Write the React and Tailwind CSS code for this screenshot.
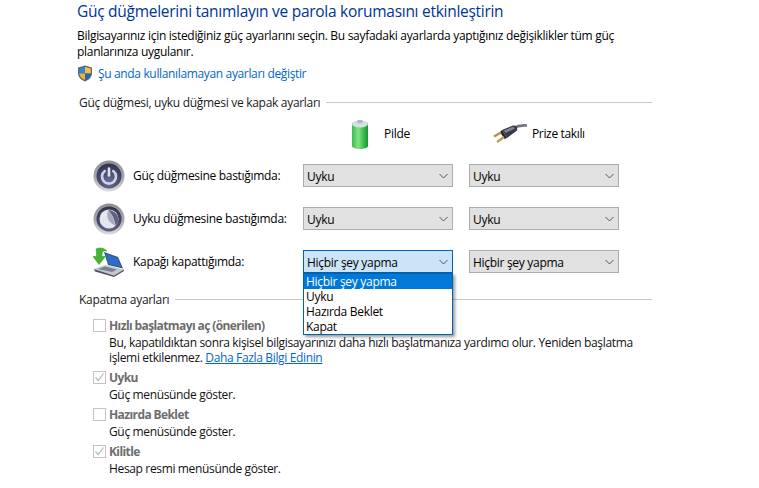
const seg = { fontFamily: '"Open Sans", "Noto Sans", sans-serif' }

function Shield() {
  return (
    <svg width="16" height="17" viewBox="0 0 16 17" className="shrink-0">
      <path d="M8 .5 L15 2.5 V8 C15 12 12 15 8 16.5 C4 15 1 12 1 8 V2.5 Z" fill="#5d6472" />
      <path d="M8 2 V8.5 H2.2 V3.5 Z" fill="#2f86dc" />
      <path d="M8 2 L13.8 3.5 V8.5 H8 Z" fill="#f7c430" />
      <path d="M2.2 8.5 H8 V15 C5 13.8 2.5 11.5 2.2 8.5 Z" fill="#f2b41f" />
      <path d="M8 8.5 H13.8 C13.5 11.5 11 13.8 8 15 Z" fill="#1f66c0" />
    </svg>
  )
}

function RoundIcon({ children, id }) {
  return (
    <svg width="32" height="32" viewBox="0 0 32 32" className="shrink-0">
      <defs>
        <linearGradient id={id + 'r'} x1="0" y1="0" x2="0" y2="1">
          <stop offset="0" stopColor="#8f8f92" />
          <stop offset=".55" stopColor="#a9a9ab" />
          <stop offset="1" stopColor="#dcdcdc" />
        </linearGradient>
        <radialGradient id={id} cx=".5" cy=".75" r=".8">
          <stop offset="0" stopColor="#6d7198" />
          <stop offset=".6" stopColor="#44476a" />
          <stop offset="1" stopColor="#2c2d46" />
        </radialGradient>
      </defs>
      <circle cx="16" cy="16" r="15.5" fill={`url(#${id}r)`} />
      <circle cx="16" cy="16" r="12.5" fill={`url(#${id})`} />
      {children}
    </svg>
  )
}

function PowerIcon() {
  return (
    <RoundIcon id="pw">
      <path d="M11.8 11 A7 7 0 1 0 20.2 11" fill="none" stroke="#cfd4e8" strokeWidth="2.6" strokeLinecap="round" />
      <path d="M16 8.5 V15.5" stroke="#dfe3f2" strokeWidth="2.6" strokeLinecap="round" />
    </RoundIcon>
  )
}

function SleepIcon() {
  return (
    <RoundIcon id="sl">
      <circle cx="16" cy="16" r="9.5" fill="#e3e5f0" />
      <path d="M15 7 C20.5 7.2 25.4 11 25.4 16.4 C25.4 19 24.2 21.4 22.6 22.8 C21.8 16.5 19 11 15 7 Z" fill="#5e617f" />
      <path d="M15 7.4 C19 11 21.4 16 22 22.4 C19 21 16.3 19.2 15 16 C14 13 14 10 15 7.4 Z" fill="#a6a9bd" />
    </RoundIcon>
  )
}

function LidIcon() {
  return (
    <svg width="32" height="32" viewBox="0 0 32 32" className="shrink-0">
      <path d="M1 23 L12 19 L31 23.5 L21 29.5 Z" fill="#c3c8d0" />
      <path d="M5 23 L12 20.5 L24 23.5 L19 26 Z" fill="#77808e" />
      <path d="M1 23 L21 29.5 L31 23.5 V25 L21 31 L2 25.5 Z" fill="#4f5562" />
      <path d="M11 6 L25 11 L30 22.5 L15 19 Z" fill="#3d5177" />
      <path d="M12.5 7.5 L24 12 L28.2 21 L15.6 18 Z" fill="#2d6ccb" />
      <path d="M3 3 C7 1 11 2 14 5 C10 4 8.5 6 9 10.5 L12.5 10.5 L6 18.5 L0 10.5 L3.5 10.5 C3.5 8 3.5 5 3 3 Z" fill="#43b52f" stroke="#2a8a20" strokeWidth=".5" />
    </svg>
  )
}

function Battery() {
  return (
    <svg width="18" height="30" viewBox="0 0 18 30" className="shrink-0">
      <defs>
        <linearGradient id="bat" x1="0" y1="0" x2="1" y2="0">
          <stop offset="0" stopColor="#3bbf4c" />
          <stop offset=".4" stopColor="#86e088" />
          <stop offset=".7" stopColor="#3cc152" />
          <stop offset="1" stopColor="#1a9430" />
        </linearGradient>
      </defs>
      <path d="M1 5 C1 3 5 2 9 2 C13 2 17 3 17 5 V27 C17 29 13 30 9 30 C5 30 1 29 1 27 Z" fill="url(#bat)" />
      <ellipse cx="9" cy="5" rx="8" ry="3.4" fill="#d6e0e2" />
      <ellipse cx="9" cy="2.6" rx="3" ry="1.8" fill="#a9bcbe" />
    </svg>
  )
}

function Plug() {
  return (
    <svg width="34" height="24" viewBox="0 0 34 24" className="shrink-0">
      <path d="M19 6.5 C24 4 29 3 34 3.5" fill="none" stroke="#75777f" strokeWidth="2.6" strokeLinecap="round" />
      <path d="M9 8 L20 3.5 C23 3 25 5.5 24 8.5 L14 16 Z" fill="#363b49" />
      <path d="M11 8.5 L20 4.8 L22 6.4 L12.5 11 Z" fill="#838896" />
      <path d="M9 8 L14 16 L11.5 17 L6.8 10 Z" fill="#232731" />
      <path d="M8 10.5 L1 14.5" stroke="#b78f42" strokeWidth="2.2" />
      <path d="M11 15 L4 20" stroke="#c09a4c" strokeWidth="2.2" />
    </svg>
  )
}

function Chevron() {
  return (
    <svg width="9" height="6" viewBox="0 0 9 6" className="shrink-0">
      <path d="M.5 1 L4.5 5 L8.5 1" fill="none" stroke="#555" strokeWidth="1" />
    </svg>
  )
}

function Select({ value, open }) {
  return (
    <div className={`flex h-[23px] w-[150px] items-center justify-between border pl-[3px] pr-[3px] ${open ? 'border-[#0063b1] bg-[#cce4f7]' : 'border-[#adadad] bg-[#e1e1e1]'}`}>
      <span className="mt-[1px] tracking-[-0.3px] text-black">{value}</span>
      <span className="pr-[1px]"><Chevron /></span>
    </div>
  )
}

function Section({ title }) {
  return (
    <div className="ml-[2px] flex items-center gap-[6px] text-[#1a1a1a]">
      <span className="tracking-[-0.3px]">{title}</span>
      <span className="h-px flex-1 bg-[#c8c8c8]" />
    </div>
  )
}

function SettingRow({ icon, label, a, b, open }) {
  return (
    <div className="flex h-[23px] items-center">
      <div className="flex w-[226px] items-center pl-[16px]">
        <div className="flex w-[40px] justify-start">{icon}</div>
        <span className="tracking-[-0.3px] text-black">{label}</span>
      </div>
      <div className="relative">
        <Select value={a} open={open} />
        {open && (
          <div className="absolute left-0 top-[23px] z-10 w-[150px] border border-[#0063b1] bg-white leading-[15px] shadow-[2px_2px_3px_rgba(0,0,0,0.4)]">
            <div className="bg-[#0078d7] pl-[2px] tracking-[-0.3px] text-white">Hiçbir şey yapma</div>
            <div className="pl-[2px] tracking-[-0.3px] text-black">Uyku</div>
            <div className="pl-[2px] tracking-[-0.3px] text-black">Hazırda Beklet</div>
            <div className="pl-[2px] tracking-[-0.3px] text-black">Kapat</div>
          </div>
        )}
      </div>
      <div className="ml-4">
        <Select value={b} />
      </div>
    </div>
  )
}

function Check({ checked }) {
  return (
    <span className="flex h-[13px] w-[13px] shrink-0 items-center justify-center border border-[#c4c4c4] bg-white">
      {checked && (
        <svg width="11" height="11" viewBox="0 0 11 11">
          <path d="M1.5 5.5 L4.2 8.5 L9.5 1.5" fill="none" stroke="#b5b5b5" strokeWidth="1.2" />
        </svg>
      )}
    </span>
  )
}

function ShutdownOption({ label, checked, children }) {
  return (
    <div className="mb-[5px]">
      <div className="flex h-[15px] items-center gap-[3px]">
        <Check checked={checked} />
        <span className="font-bold tracking-[-0.6px] text-[#6d6d6d]">{label}</span>
      </div>
      <div className="mt-[2px] pl-[16px] tracking-[-0.35px] text-[#111]">{children}</div>
    </div>
  )
}

export default function App() {
  return (
    <div className="h-[488px] w-[759px] overflow-hidden bg-white text-[12px] leading-[15px]" style={seg}>
      <div className="w-[652px] pl-[77px] pt-[1px]">
        <h1 className="text-[15.5px] leading-[21px] tracking-[-0.28px] text-[#003399]">Güç düğmelerini tanımlayın ve parola korumasını etkinleştirin</h1>
        <p className="mt-[6px] w-[560px] leading-[16px] tracking-[-0.3px] text-black">
          Bilgisayarınız için istediğiniz güç ayarlarını seçin. Bu sayfadaki ayarlarda yaptığınız değişiklikler tüm güç planlarınıza uygulanır.
        </p>
        <div className="mt-[5px] flex items-center gap-[5px]">
          <Shield />
          <a className="tracking-[-0.35px] text-[#0066cc]">Şu anda kullanılamayan ayarları değiştir</a>
        </div>

        <div className="mt-[13px]">
          <Section title="Güç düğmesi, uyku düğmesi ve kapak ayarları" />
        </div>

        <div className="mt-[8px] flex h-[32px] items-center pl-[274px]">
          <Battery />
          <span className="mb-[2px] ml-[15px] w-[31px] tracking-[-0.3px] text-black">Pilde</span>
          <span className="ml-[78px]"><Plug /></span>
          <span className="mb-[2px] ml-[5px] tracking-[-0.35px] text-black">Prize takılı</span>
        </div>

        <div className="mt-[14px] flex flex-col gap-5">
          <SettingRow icon={<PowerIcon />} label="Güç düğmesine bastığımda:" a="Uyku" b="Uyku" />
          <SettingRow icon={<SleepIcon />} label="Uyku düğmesine bastığımda:" a="Uyku" b="Uyku" />
          <SettingRow icon={<LidIcon />} label="Kapağı kapattığımda:" a="Hiçbir şey yapma" b="Hiçbir şey yapma" open />
        </div>

        <div className="mt-[19px]">
          <Section title="Kapatma ayarları" />
        </div>

        <div className="mt-[11px] pl-[16px]">
          <ShutdownOption label="Hızlı başlatmayı aç (önerilen)">
            Bu, kapatıldıktan sonra kişisel bilgisayarınızı daha hızlı başlatmanıza yardımcı olur. Yeniden başlatma
            <br />
            işlemi etkilenmez. <a className="text-[#0066cc] underline">Daha Fazla Bilgi Edinin</a>
          </ShutdownOption>
          <ShutdownOption label="Uyku" checked>Güç menüsünde göster.</ShutdownOption>
          <ShutdownOption label="Hazırda Beklet">Güç menüsünde göster.</ShutdownOption>
          <ShutdownOption label="Kilitle" checked>Hesap resmi menüsünde göster.</ShutdownOption>
        </div>
      </div>
    </div>
  )
}
